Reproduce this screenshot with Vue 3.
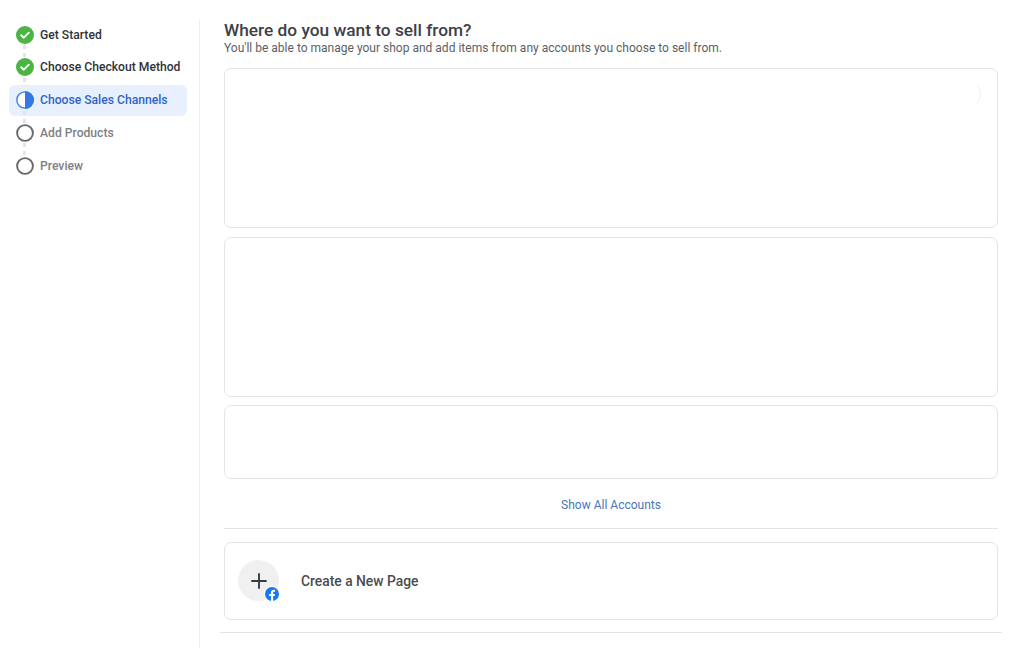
<script setup>
const steps = [
  { label: 'Get Started', state: 'done' },
  { label: 'Choose Checkout Method', state: 'done' },
  { label: 'Choose Sales Channels', state: 'active' },
  { label: 'Add Products', state: 'todo' },
  { label: 'Preview', state: 'todo' },
]
</script>

<template>
  <div class="page">
    <aside class="sidebar">
      <ul class="steps">
        <li v-for="(s, i) in steps" :key="s.label" class="step" :class="s.state">
          <svg class="icon" viewBox="0 0 18 18" width="18" height="18" aria-hidden="true">
            <template v-if="s.state === 'done'">
              <circle cx="9" cy="9" r="9" fill="#4bb543" />
              <path d="M5.2 9.2l2.6 2.5 5-5" fill="none" stroke="#fff" stroke-width="1.9" stroke-linecap="round" stroke-linejoin="round" />
            </template>
            <template v-else-if="s.state === 'active'">
              <circle cx="9" cy="9" r="8.2" fill="#fff" stroke="#3578e5" stroke-width="1.3" />
              <path d="M9 0a9 9 0 0 1 0 18z" fill="#3578e5" />
            </template>
            <circle v-else cx="9" cy="9" r="7.9" fill="#fff" stroke="#65676b" stroke-width="1.9" />
          </svg>
          <span class="label">{{ s.label }}</span>
          <span v-if="i < steps.length - 1" class="dots"></span>
        </li>
      </ul>
    </aside>

    <main class="main">
      <h1 class="title">Where do you want to sell from?</h1>
      <p class="sub">You'll be able to manage your shop and add items from any accounts you choose to sell from.</p>

      <div class="card tall first">
        <svg class="ghost-chevron" viewBox="0 0 6 20" width="6" height="20" aria-hidden="true">
          <path d="M1 1c4.6 4 4.6 14 0 18" fill="none" stroke="#f1f1f1" stroke-width="1.2" />
        </svg>
      </div>
      <div class="card tall second"></div>
      <div class="card short"></div>

      <a class="show-all">Show All Accounts</a>
      <hr class="rule" />

      <div class="card create">
        <div class="avatar">
          <svg viewBox="0 0 16 16" width="16" height="16" aria-hidden="true">
            <path d="M8 1v14M1 8h14" stroke="#3a3b3f" stroke-width="1.9" stroke-linecap="round" />
          </svg>
          <span class="fb">
            <svg viewBox="0 0 16 16" width="14" height="14" aria-hidden="true">
              <circle cx="8" cy="8" r="8" fill="#1877f2" />
              <path d="M11.1 10.3l.4-2.3H9.3V6.5c0-.6.3-1.2 1.3-1.2h1V3.3s-.9-.2-1.8-.2c-1.8 0-3 1.1-3 3.1V8h-2v2.3h2v5.6a8 8 0 0 0 2.5 0v-5.6z" fill="#fff" />
            </svg>
          </span>
        </div>
        <span class="create-label">Create a New Page</span>
      </div>

      <hr class="rule wide" />
    </main>
  </div>
</template>

<style>
html, body { margin: 0; background: #fff; }
</style>

<style scoped>
.page {
  display: flex;
  width: 1024px;
  height: 648px;
  overflow: hidden;
  background: #fff;
  font-family: Roboto, "Liberation Sans", sans-serif;
  color: #444950;
}
.sidebar {
  box-sizing: border-box;
  width: 200px;
  height: 628px;
  margin-top: 20px;
  padding: 0 12px 0 9px;
  border-right: 1px solid #ececec;
}
.steps {
  list-style: none;
  margin: -1px 0 0;
  padding: 0;
}
.step {
  position: relative;
  display: flex;
  align-items: center;
  gap: 6px;
  box-sizing: border-box;
  height: 31px;
  margin-bottom: 1.8px;
  padding-left: 7px;
  border-radius: 6px;
  font-size: 12.15px;
  font-weight: 500;
  white-space: nowrap;
}
.step.done .label { color: #303338; }
.step.active { background: #e7f0fc; }
.step.active .label { color: #2f65c9; }
.step.todo .label { color: #7e8085; }
.icon { flex: none; }
.dots {
  position: absolute;
  left: 14px;
  top: 26px;
  height: 12px;
  border-left: 3px dotted #e2e4e6;
}
.main {
  display: flex;
  flex-direction: column;
  width: 774px;
  margin-left: 24px;
  padding-top: 20px;
}
.title {
  margin: 0;
  font-size: 17.3px;
  line-height: 20px;
  font-weight: 500;
  color: #3d4046;
}
.sub {
  margin: 0;
  font-size: 12.02px;
  line-height: 16px;
  color: #5c5f65;
}
.card {
  position: relative;
  box-sizing: border-box;
  flex: none;
  border: 1px solid #e4e4e4;
  border-radius: 7px;
  background: #fff;
}
.tall { height: 160px; margin-top: 9px; }
.first { margin-top: 12px; }
.short { height: 74px; margin-top: 8px; }
.ghost-chevron {
  position: absolute;
  right: 15px;
  top: 15px;
}
.show-all {
  margin-top: 18px;
  font-size: 12px;
  line-height: 16px;
  text-align: center;
  color: #4a76b8;
}
.rule {
  flex: none;
  width: 100%;
  height: 1px;
  margin: 15px 0 0;
  border: 0;
  background: #e4e4e4;
}
.rule.wide {
  width: 782px;
  margin: 12px 0 0 -4px;
}
.create {
  display: flex;
  align-items: center;
  gap: 22px;
  height: 78px;
  margin-top: 13px;
  padding-left: 13px;
}
.avatar {
  position: relative;
  display: flex;
  align-items: center;
  justify-content: center;
  width: 41px;
  height: 41px;
  margin-bottom: 1px;
  border-radius: 50%;
  background: #f0f0f0;
}
.fb {
  position: absolute;
  right: -1px;
  bottom: -1px;
  display: flex;
  padding: 1px;
  border-radius: 50%;
  background: #fff;
}
.create-label {
  font-size: 13.85px;
  font-weight: 500;
  color: #4b4c4f;
}
</style>
